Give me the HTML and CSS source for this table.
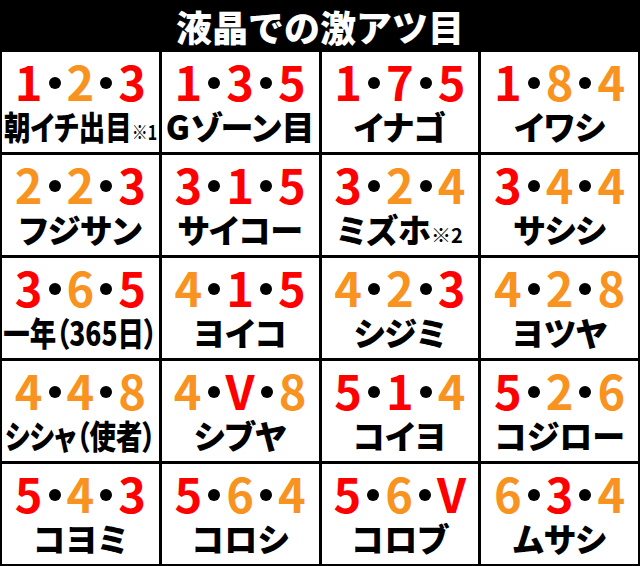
FILE: index.html
```html
<!DOCTYPE html>
<html lang="ja">
<head>
<meta charset="utf-8">
<title>液晶での激アツ目</title>
<link rel="stylesheet" href="styles.css">
</head>
<body>
<div class="board">
  <h1 class="title">液晶での激アツ目</h1>
  <div class="grid">
    <div class="cell"><div class="nums"><span class="r">1</span><i class="dot"></i><span class="o">2</span><i class="dot"></i><span class="r">3</span></div><div class="name"><span class="cond">朝イチ出目<small class="note">※1</small></span></div></div>
    <div class="cell"><div class="nums"><span class="r">1</span><i class="dot"></i><span class="r">3</span><i class="dot"></i><span class="r">5</span></div><div class="name">Gゾーン目</div></div>
    <div class="cell"><div class="nums"><span class="r">1</span><i class="dot"></i><span class="r">7</span><i class="dot"></i><span class="r">5</span></div><div class="name">イナゴ</div></div>
    <div class="cell"><div class="nums"><span class="r">1</span><i class="dot"></i><span class="o">8</span><i class="dot"></i><span class="o">4</span></div><div class="name">イワシ</div></div>

    <div class="cell"><div class="nums"><span class="o">2</span><i class="dot"></i><span class="o">2</span><i class="dot"></i><span class="r">3</span></div><div class="name">フジサン</div></div>
    <div class="cell"><div class="nums"><span class="r">3</span><i class="dot"></i><span class="r">1</span><i class="dot"></i><span class="r">5</span></div><div class="name">サイコー</div></div>
    <div class="cell"><div class="nums"><span class="r">3</span><i class="dot"></i><span class="o">2</span><i class="dot"></i><span class="o">4</span></div><div class="name">ミズホ<small class="note">※2</small></div></div>
    <div class="cell"><div class="nums"><span class="r">3</span><i class="dot"></i><span class="o">4</span><i class="dot"></i><span class="o">4</span></div><div class="name">サシシ</div></div>

    <div class="cell"><div class="nums"><span class="r">3</span><i class="dot"></i><span class="o">6</span><i class="dot"></i><span class="r">5</span></div><div class="name"><span class="cond">一年（365日）</span></div></div>
    <div class="cell"><div class="nums"><span class="o">4</span><i class="dot"></i><span class="r">1</span><i class="dot"></i><span class="r">5</span></div><div class="name">ヨイコ</div></div>
    <div class="cell"><div class="nums"><span class="o">4</span><i class="dot"></i><span class="o">2</span><i class="dot"></i><span class="r">3</span></div><div class="name">シジミ</div></div>
    <div class="cell"><div class="nums"><span class="o">4</span><i class="dot"></i><span class="o">2</span><i class="dot"></i><span class="o">8</span></div><div class="name">ヨツヤ</div></div>

    <div class="cell"><div class="nums"><span class="o">4</span><i class="dot"></i><span class="o">4</span><i class="dot"></i><span class="o">8</span></div><div class="name"><span class="cond">シシャ（使者）</span></div></div>
    <div class="cell"><div class="nums"><span class="o">4</span><i class="dot"></i><span class="r">V</span><i class="dot"></i><span class="o">8</span></div><div class="name">シブヤ</div></div>
    <div class="cell"><div class="nums"><span class="r">5</span><i class="dot"></i><span class="r">1</span><i class="dot"></i><span class="o">4</span></div><div class="name">コイヨ</div></div>
    <div class="cell"><div class="nums"><span class="r">5</span><i class="dot"></i><span class="o">2</span><i class="dot"></i><span class="o">6</span></div><div class="name">コジロー</div></div>

    <div class="cell"><div class="nums"><span class="r">5</span><i class="dot"></i><span class="o">4</span><i class="dot"></i><span class="r">3</span></div><div class="name">コヨミ</div></div>
    <div class="cell"><div class="nums"><span class="r">5</span><i class="dot"></i><span class="o">6</span><i class="dot"></i><span class="o">4</span></div><div class="name">コロシ</div></div>
    <div class="cell"><div class="nums"><span class="r">5</span><i class="dot"></i><span class="o">6</span><i class="dot"></i><span class="r">V</span></div><div class="name">コロブ</div></div>
    <div class="cell"><div class="nums"><span class="o">6</span><i class="dot"></i><span class="r">3</span><i class="dot"></i><span class="o">4</span></div><div class="name">ムサシ</div></div>
  </div>
</div>
</body>
</html>
```

FILE: styles.css
```css
* { box-sizing: border-box; }
html, body { margin: 0; padding: 0; background: #000; }
body {
  font-family: "Noto Sans CJK JP", "Noto Sans", sans-serif;
  font-weight: 900;
}
.board {
  width: 640px;
  height: 566px;
  background: #000;
  display: flex;
  flex-direction: column;
}
.title {
  margin: 0;
  height: 52px;
  color: #fff;
  font-size: 36px;
  font-weight: 900;
  line-height: 52px;
  text-align: center;
  white-space: nowrap;
}
.grid {
  flex: 1;
  display: grid;
  grid-template-columns: repeat(4, minmax(0, 1fr));
  grid-template-rows: repeat(5, minmax(0, 1fr));
  gap: 3px;
  padding: 0 2px 2px;
}
.cell {
  background: #fff;
  display: flex;
  flex-direction: column;
  align-items: center;
  justify-content: flex-start;
  min-width: 0;
}
.nums {
  font-size: 47px;
  font-weight: 700;
  line-height: 1;
  margin-top: 5px;
  display: flex;
  align-items: center;
  white-space: nowrap;
}
.r { color: #ff0000; }
.o { color: #f7931e; }
.dot {
  display: inline-block;
  width: 12px;
  height: 12px;
  border-radius: 50%;
  background: #000;
  margin: 4px 6px 0;
}
.name {
  font-size: 33px;
  font-weight: 900;
  line-height: 1;
  margin-top: 6px;
  color: #000;
  white-space: nowrap;
  font-feature-settings: "palt";
}
.note {
  font-size: 20px;
  font-weight: 700;
}
.cond {
  display: inline-block;
  transform: scaleX(0.8);
  margin: 0 -18px;
}
```
